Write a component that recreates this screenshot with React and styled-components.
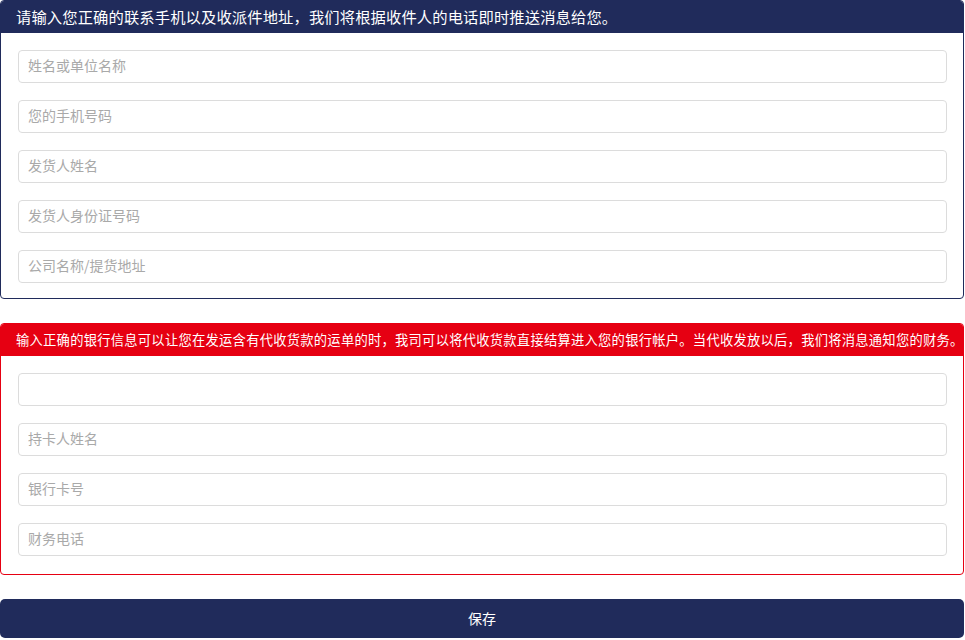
import React from 'react'
import styled, { createGlobalStyle } from 'styled-components'

const GlobalStyle = createGlobalStyle`
  html, body {
    margin: 0;
    padding: 0;
    background: #fff;
    font-family: "Noto Sans CJK SC", "Liberation Sans", sans-serif;
  }
  * { box-sizing: border-box; }
`

const NAVY = '#202b5b'
const RED = '#e60012'

function App() {
  return (
    <Page>
      <GlobalStyle />
      <Panel color={NAVY}>
        <PanelHeader color={NAVY} size="15.3px" spacing="0.12px">
          请输入您正确的联系手机以及收派件地址，我们将根据收件人的电话即时推送消息给您。
        </PanelHeader>
        <Fields bottom="15px">
          <Input placeholder="姓名或单位名称" />
          <Input placeholder="您的手机号码" />
          <Input placeholder="发货人姓名" />
          <Input placeholder="发货人身份证号码" />
          <Input placeholder="公司名称/提货地址" />
        </Fields>
      </Panel>
      <Panel color={RED}>
        <PanelHeader color={RED} size="13.3px" spacing="0.24px">
          输入正确的银行信息可以让您在发运含有代收货款的运单的时，我司可以将代收货款直接结算进入您的银行帐户。当代收发放以后，我们将消息通知您的财务。
        </PanelHeader>
        <Fields bottom="18px">
          <Input placeholder="" />
          <Input placeholder="持卡人姓名" />
          <Input placeholder="银行卡号" />
          <Input placeholder="财务电话" />
        </Fields>
      </Panel>
      <SaveButton>保存</SaveButton>
    </Page>
  )
}

export default App

const Page = styled.div`
  width: 964px;
  display: flex;
  flex-direction: column;
  gap: 24px;
`

const Panel = styled.section`
  border: 1px solid ${p => p.color};
  border-radius: 4px;
  overflow: hidden;
  background: #fff;
`

const PanelHeader = styled.div`
  background: ${p => p.color};
  color: #fff;
  height: 33px;
  margin: -1px -1px 0;
  padding: 0 0 1px 16px;
  display: flex;
  align-items: center;
  font-size: ${p => p.size};
  letter-spacing: ${p => p.spacing};
  white-space: nowrap;
  border-radius: 4px 4px 0 0;
`

const Fields = styled.div`
  display: flex;
  flex-direction: column;
  gap: 17px;
  padding: 17px 16px ${p => p.bottom} 17px;
`

const Input = styled.input`
  height: 33px;
  width: 100%;
  border: 1px solid #dcdcdc;
  border-radius: 4px;
  padding: 0 9px 3px;
  font-size: 14px;
  font-family: "Noto Sans CJK SC", "Liberation Sans", sans-serif;
  color: #333;
  outline: none;
  &::placeholder {
    color: #a9a9a9;
  }
`

const SaveButton = styled.button`
  height: 39px;
  width: 100%;
  padding: 0 0 2px;
  border: none;
  border-radius: 5px;
  background: ${NAVY};
  color: #fff;
  font-size: 14px;
  font-family: "Noto Sans CJK SC", "Liberation Sans", sans-serif;
  cursor: pointer;
`
